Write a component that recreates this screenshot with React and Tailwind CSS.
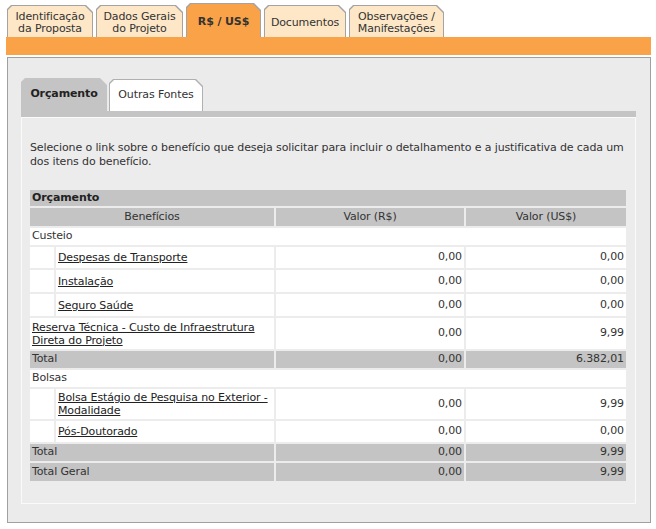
import React from "react";

const clip = "[clip-path:polygon(0_4px,4px_0,calc(100%-7px)_0,100%_7px,100%_100%,0_100%)]";

function TopTab({ w, active, children }) {
  return (
    <div
      className={`${active ? "h-[34px]" : "h-[32px]"} bg-[#a3a3a3] pt-px px-px [clip-path:polygon(0_4px,4px_0,calc(100%-7px)_0,100%_7px,100%_100%,0_100%)]`}
      style={{ width: w }}
    >
      <div
        className={`h-full w-full flex items-center justify-center text-center leading-[12px] pt-[2px] [clip-path:polygon(0_4px,4px_0,calc(100%-7px)_0,100%_7px,100%_100%,0_100%)] ${
          active ? "bg-[#f9a247] font-bold text-[#333]" : "bg-[#fde7c7] text-[#333]"
        }`}
      >
        {children}
      </div>
    </div>
  );
}

function Cell({ w, gray, right, center, children, className = "" }) {
  return (
    <div
      className={`flex items-center whitespace-nowrap ${right ? "justify-end pr-[2px]" : center ? "justify-center" : "pl-[2px]"} ${
        gray ? "bg-[#c4c4c4]" : "bg-white"
      } ${className}`}
      style={{ width: w }}
    >
      {children}
    </div>
  );
}

function LinkRow({ h, label, r, u }) {
  return (
    <div className="flex gap-[2px]" style={{ height: h }}>
      <Cell w={24} />
      <Cell w={218} className="leading-[13px]">
        <span className="underline text-[#222]">{label}</span>
      </Cell>
      <Cell w={188} right>{r}</Cell>
      <Cell w={160} right>{u}</Cell>
    </div>
  );
}

function TotalRow({ label, r, u }) {
  return (
    <div className="flex gap-[2px] h-[17px]">
      <Cell w={244} gray>{label}</Cell>
      <Cell w={188} gray right>{r}</Cell>
      <Cell w={160} gray right>{u}</Cell>
    </div>
  );
}

export default function App() {
  return (
    <div className="w-[656px] h-[529px] bg-white overflow-hidden font-['DejaVu_Sans',Verdana,sans-serif] text-[11px] tracking-[-0.12px] text-[#333]">
      <div className="h-[37px] pl-[7px] flex items-end gap-[3px]">
        <TopTab w={86}>Identificação<br />da Proposta</TopTab>
        <TopTab w={87}>Dados Gerais<br />do Projeto</TopTab>
        <TopTab w={75} active>R$ / US$</TopTab>
        <TopTab w={82}>Documentos</TopTab>
        <TopTab w={95}>Observações /<br />Manifestações</TopTab>
      </div>
      <div className="ml-[6px] w-[645px] h-[18px] bg-[#f9a247]" />
      <div className="mt-[2px] ml-[7px] w-[644px] h-[466px] border border-[#a0a0a0] bg-[#ebebeb] pt-[20px] pl-[13px]">
        <div className="flex items-end gap-[2px] h-[33px]">
          <div className={`w-[86px] h-[33px] bg-[#c4c4c4] flex items-center justify-center font-bold text-[#222] ${clip}`}>
            Orçamento
          </div>
          <div className={`w-[94px] h-[32px] bg-[#b0b0b0] pt-px px-px ${clip}`}>
            <div className={`w-full h-full bg-white flex items-center justify-center text-[#333] ${clip}`}>
              Outras Fontes
            </div>
          </div>
        </div>
        <div className="w-[615px] h-[6px] bg-[#c4c4c4]" />
        <div className="w-[615px] h-[387px] border border-[#fafafa] bg-[#ececec] pl-[8px] pt-[23px]">
          <p className="leading-[14px] text-[#333] whitespace-nowrap">
            Selecione o link sobre o benefício que deseja solicitar para incluir o detalhamento e a justificativa de cada um
            <br />
            dos itens do benefício.
          </p>
          <div className="mt-[21px] w-[596px] flex flex-col gap-[2px] text-[#333]">
            <div className="h-[16px] bg-[#c4c4c4] flex items-center pl-[2px] font-bold text-[#222]">Orçamento</div>
            <div className="flex gap-[2px] h-[18px]">
              <Cell w={244} gray center>Benefícios</Cell>
              <Cell w={188} gray center>Valor (R$)</Cell>
              <Cell w={160} gray center>Valor (US$)</Cell>
            </div>
            <div className="h-[17px] bg-white flex items-center pl-[2px]">Custeio</div>
            <LinkRow h={21} label="Despesas de Transporte" r="0,00" u="0,00" />
            <LinkRow h={22} label="Instalação" r="0,00" u="0,00" />
            <LinkRow h={22} label="Seguro Saúde" r="0,00" u="0,00" />
            <div className="flex gap-[2px] h-[31px]">
              <Cell w={244} className="leading-[13px]">
                <span className="underline text-[#222]">
                  Reserva Técnica - Custo de Infraestrutura
                  <br />
                  Direta do Projeto
                </span>
              </Cell>
              <Cell w={188} right>0,00</Cell>
              <Cell w={160} right>9,99</Cell>
            </div>
            <TotalRow label="Total" r="0,00" u="6.382,01" />
            <div className="h-[17px] bg-white flex items-center pl-[2px]">Bolsas</div>
            <LinkRow
              h={30}
              label={
                <>
                  Bolsa Estágio de Pesquisa no Exterior -
                  <br />
                  Modalidade
                </>
              }
              r="0,00"
              u="9,99"
            />
            <LinkRow h={21} label="Pós-Doutorado" r="0,00" u="0,00" />
            <TotalRow label="Total" r="0,00" u="9,99" />
            <div className="flex gap-[2px] h-[18px]">
              <Cell w={244} gray>Total Geral</Cell>
              <Cell w={188} gray right>0,00</Cell>
              <Cell w={160} gray right>9,99</Cell>
            </div>
          </div>
        </div>
      </div>
    </div>
  );
}
